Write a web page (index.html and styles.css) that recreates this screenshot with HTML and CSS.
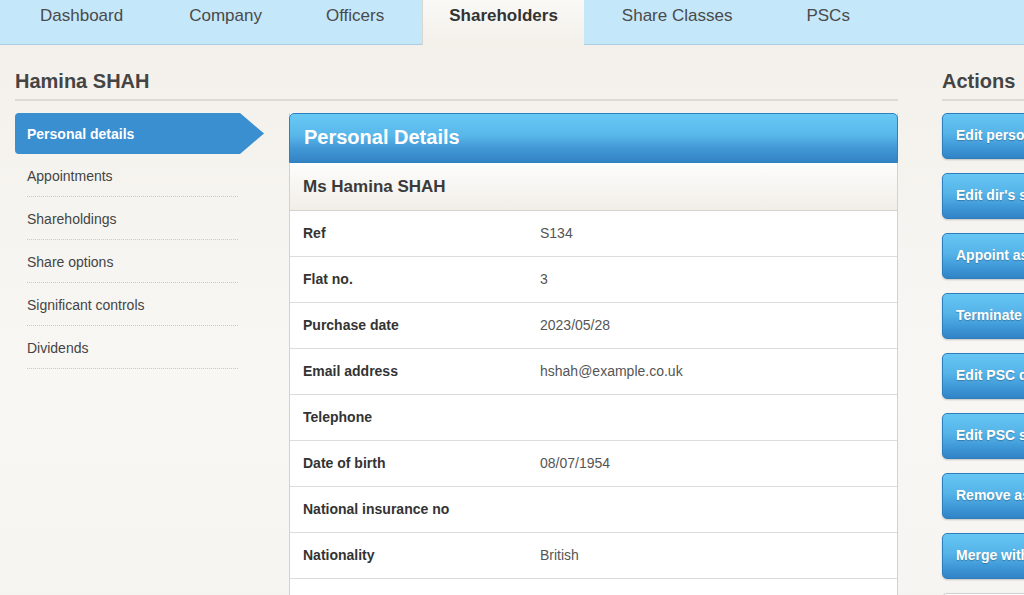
FILE: index.html
```html
<!DOCTYPE html>
<html lang="en">
<head>
  <meta charset="UTF-8">
  <title>Hamina SHAH - Shareholders</title>
  <link rel="stylesheet" href="styles.css">
</head>
<body>
  <nav class="tabs">
    <a class="tab" href="#">Dashboard</a>
    <a class="tab" href="#">Company</a>
    <a class="tab" href="#">Officers</a>
    <a class="tab tab-active" href="#">Shareholders</a>
    <a class="tab" href="#">Share Classes</a>
    <a class="tab" href="#">PSCs</a>
  </nav>

  <div class="page">
    <section class="main">
      <h1 class="title">Hamina SHAH</h1>

      <div class="content">
        <ul class="side-nav">
          <li class="side-item side-active">Personal details</li>
          <li class="side-item">Appointments</li>
          <li class="side-item">Shareholdings</li>
          <li class="side-item">Share options</li>
          <li class="side-item">Significant controls</li>
          <li class="side-item">Dividends</li>
        </ul>

        <div class="panel">
          <div class="panel-head">Personal Details</div>
          <div class="panel-sub">Ms Hamina SHAH</div>
          <dl class="details">
            <div class="row"><dt>Ref</dt><dd>S134</dd></div>
            <div class="row"><dt>Flat no.</dt><dd>3</dd></div>
            <div class="row"><dt>Purchase date</dt><dd>2023/05/28</dd></div>
            <div class="row"><dt>Email address</dt><dd>hshah@example.co.uk</dd></div>
            <div class="row"><dt>Telephone</dt><dd></dd></div>
            <div class="row"><dt>Date of birth</dt><dd>08/07/1954</dd></div>
            <div class="row"><dt>National insurance no</dt><dd></dd></div>
            <div class="row"><dt>Nationality</dt><dd>British</dd></div>
            <div class="row"><dt>US Citizen</dt><dd>Unknown</dd></div>
          </dl>
        </div>
      </div>
    </section>

    <aside class="actions">
      <h2 class="title">Actions</h2>
      <a class="btn" href="#">Edit personal details</a>
      <a class="btn" href="#">Edit dir's service address</a>
      <a class="btn" href="#">Appoint as officer</a>
      <a class="btn" href="#">Terminate shareholding</a>
      <a class="btn" href="#">Edit PSC details</a>
      <a class="btn" href="#">Edit PSC statements</a>
      <a class="btn" href="#">Remove as shareholder</a>
      <a class="btn" href="#">Merge with another person</a>
      <a class="btn btn-plain" href="#">Delete</a>
    </aside>
  </div>
</body>
</html>
```

FILE: styles.css
```css
html, body {
  overflow: hidden;
}

body {
  margin: 0;
  font-family: "Liberation Sans", Arial, sans-serif;
  font-size: 14px;
  color: #444;
  background: linear-gradient(to bottom, #f3f0ea 0, #f8f7f4 380px, #f6f4f0 100%);
  min-height: 595px;
}

a {
  text-decoration: none;
}

/* top tabs */
.tabs {
  display: flex;
  height: 44px;
  padding-left: 8px;
  background: #c4e7fa;
  border-bottom: 1px solid #a9cde1;
}

.tab {
  margin: 0 6px;
  padding: 6px 26px 0;
  font-size: 17px;
  line-height: 20px;
  color: #4a4a4a;
  white-space: nowrap;
}

.tab:nth-child(2) {
  margin-left: 8px;
}

.tab:last-child {
  margin-left: 16px;
}

.tab-active {
  height: 39px;
  margin-bottom: -1px;
  background: linear-gradient(to bottom, #faf9f6, #f3f0ea);
  border-left: 1px solid #d9d6d0;
  font-weight: bold;
  color: #333;
}

/* page columns */
.page {
  display: flex;
  gap: 44px;
  padding-left: 15px;
}

.main {
  flex: none;
  width: 883px;
}

.actions {
  flex: none;
  width: 220px;
}

.title {
  margin: 0 0 12px;
  padding: 24px 0 6px;
  font-size: 20px;
  line-height: 24px;
  font-weight: bold;
  color: #444;
  border-bottom: 2px solid #dddad4;
}

.content {
  display: flex;
  gap: 25px;
  align-items: flex-start;
}

/* sidebar */
.side-nav {
  flex: none;
  width: 249px;
  margin: 0;
  padding: 0;
  list-style: none;
}

.side-item {
  margin-left: 12px;
  width: 211px;
  padding: 12px 0 10px;
  line-height: 20px;
  border-bottom: 1px dotted #c9c9c9;
  color: #444;
}

.side-active {
  margin-left: 0;
  width: 249px;
  box-sizing: border-box;
  padding: 1px 12px 0;
  line-height: 40px;
  border: none;
  border-radius: 4px 0 0 4px;
  background: #3a8fd1;
  color: #fff;
  font-weight: bold;
  clip-path: polygon(0 0, 225px 0, 100% 50%, 225px 100%, 0 100%);
}

/* details panel */
.panel {
  flex: none;
  width: 609px;
  box-sizing: border-box;
  background: #fff;
  border: 1px solid #d2d2d2;
  border-top: none;
}

.panel-head {
  margin: 0 -1px;
  height: 48px;
  padding-left: 14px;
  line-height: 47px;
  font-size: 20px;
  font-weight: bold;
  color: #fff;
  border: 1px solid #2f80c1;
  border-radius: 5px 5px 0 0;
  background: linear-gradient(to bottom, #68c9f5 0%, #58b7ea 45%, #4299d6 70%, #3383c4 100%);
}

.panel-sub {
  height: 47px;
  padding-left: 13px;
  line-height: 47px;
  font-size: 17px;
  font-weight: bold;
  color: #3a3a3a;
  background: linear-gradient(to bottom, #fdfdfc, #f1eee8);
  border-bottom: 1px solid #d6d3cd;
}

.details {
  margin: 0;
}

.row {
  display: grid;
  grid-template-columns: 250px 1fr;
  height: 45px;
  line-height: 45px;
  border-bottom: 1px solid #dcdcdc;
}

.row dt {
  padding-left: 13px;
  font-weight: bold;
  color: #333;
}

.row dd {
  margin: 0;
  color: #555;
}

/* action buttons */
.btn {
  display: block;
  height: 44px;
  margin-bottom: 14px;
  padding-left: 13px;
  line-height: 43px;
  font-weight: bold;
  color: #fff;
  white-space: nowrap;
  overflow: hidden;
  border: 1px solid #2b7fbf;
  border-radius: 5px;
  text-shadow: 0 1px 1px rgba(0, 0, 0, 0.25);
  background: linear-gradient(to bottom, #66c6f3 0%, #55b3e8 45%, #3f98d7 75%, #3283c6 100%);
  box-shadow: 0 1px 2px rgba(0, 0, 0, 0.2);
}

.btn-plain {
  background: #fff;
  border-color: #cfcfcf;
  color: #444;
  text-shadow: none;
}
```
